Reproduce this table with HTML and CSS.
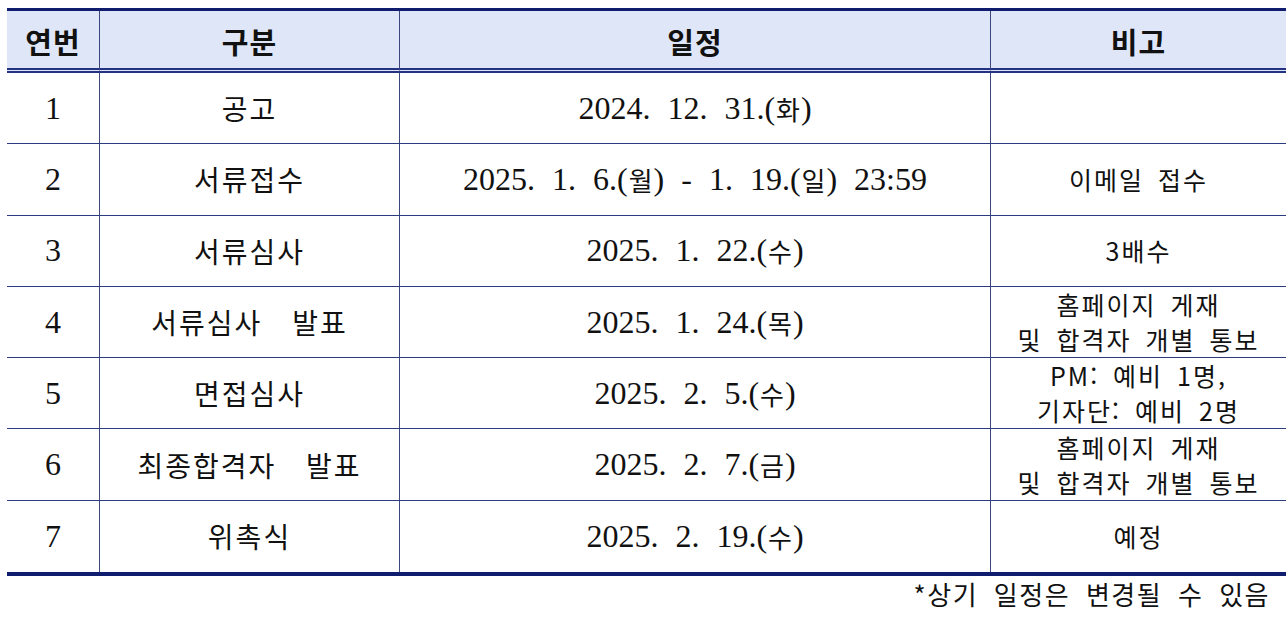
FILE: index.html
```html
<!DOCTYPE html>
<html lang="ko">
<head>
<meta charset="utf-8">
<title>일정</title>
<link rel="stylesheet" href="styles.css">
</head>
<body>
<div class="page">
  <div class="sched">
    <div class="cell head c1">연번</div>
    <div class="cell head">구분</div>
    <div class="cell head">일정</div>
    <div class="cell head">비고</div>

    <div class="cell num c1">1</div>
    <div class="cell kind">공고</div>
    <div class="cell date">2024. 12. 31.(<span class="dw">화</span>)</div>
    <div class="cell note"></div>

    <div class="cell num c1">2</div>
    <div class="cell kind">서류접수</div>
    <div class="cell date">2025. 1. 6.(<span class="dw">월</span>) - 1. 19.(<span class="dw">일</span>) 23:59</div>
    <div class="cell note">이메일 접수</div>

    <div class="cell num c1">3</div>
    <div class="cell kind">서류심사</div>
    <div class="cell date">2025. 1. 22.(<span class="dw">수</span>)</div>
    <div class="cell note">3배수</div>

    <div class="cell num c1">4</div>
    <div class="cell kind">서류심사 발표</div>
    <div class="cell date">2025. 1. 24.(<span class="dw">목</span>)</div>
    <div class="cell note">홈페이지 게재<br>및 합격자 개별 통보</div>

    <div class="cell num c1">5</div>
    <div class="cell kind">면접심사</div>
    <div class="cell date">2025. 2. 5.(<span class="dw">수</span>)</div>
    <div class="cell note">PM: 예비 1명,<br>기자단: 예비 2명</div>

    <div class="cell num c1">6</div>
    <div class="cell kind">최종합격자 발표</div>
    <div class="cell date">2025. 2. 7.(<span class="dw">금</span>)</div>
    <div class="cell note">홈페이지 게재<br>및 합격자 개별 통보</div>

    <div class="cell num c1 last">7</div>
    <div class="cell kind last">위촉식</div>
    <div class="cell date last">2025. 2. 19.(<span class="dw">수</span>)</div>
    <div class="cell note last">예정</div>
  </div>
  <div class="foot">*상기 일정은 변경될 수 있음</div>
</div>
</body>
</html>
```

FILE: styles.css
```css
html, body {
  margin: 0;
  padding: 0;
  background: #ffffff;
}

.page {
  padding: 8px 2px 0 7px;
  font-family: "Noto Sans CJK KR", "Noto Sans", sans-serif;
  color: #111111;
}

.sched {
  display: grid;
  grid-template-columns: 92px 300px 591px 296px;
  grid-template-rows: 62px repeat(7, 71.3px);
  border-top: 3px solid #101c6e;
  border-bottom: 4px solid #101c6e;
}

.cell {
  box-sizing: border-box;
  display: flex;
  align-items: center;
  justify-content: center;
  text-align: center;
  border-left: 1px solid #3c4780;
  border-bottom: 1px solid #2c3a80;
}

.cell.c1 {
  border-left: none;
}

.cell.last {
  border-bottom: none;
}

.head {
  background: #dfe6f7;
  border-bottom: 5px double #243381;
  font-weight: 700;
  font-size: 29px;
  letter-spacing: 1px;
  padding-top: 2px;
}

.num {
  font-family: "Liberation Serif", serif;
  font-size: 32px;
}

.kind {
  font-size: 28px;
  letter-spacing: 2px;
  word-spacing: 20px;
}

.date {
  font-family: "Liberation Serif", "Noto Sans CJK KR", serif;
  font-size: 32px;
  word-spacing: 9px;
}

.dw {
  font-family: "Noto Sans CJK KR", sans-serif;
  font-size: 26px;
  padding: 0 1px;
}

.note {
  font-size: 25px;
  line-height: 35px;
  letter-spacing: 2px;
  word-spacing: 5px;
}

.foot {
  text-align: right;
  padding-right: 16px;
  padding-top: 1px;
  font-size: 26px;
  line-height: 34px;
  letter-spacing: 1.5px;
  word-spacing: 7px;
}
```
